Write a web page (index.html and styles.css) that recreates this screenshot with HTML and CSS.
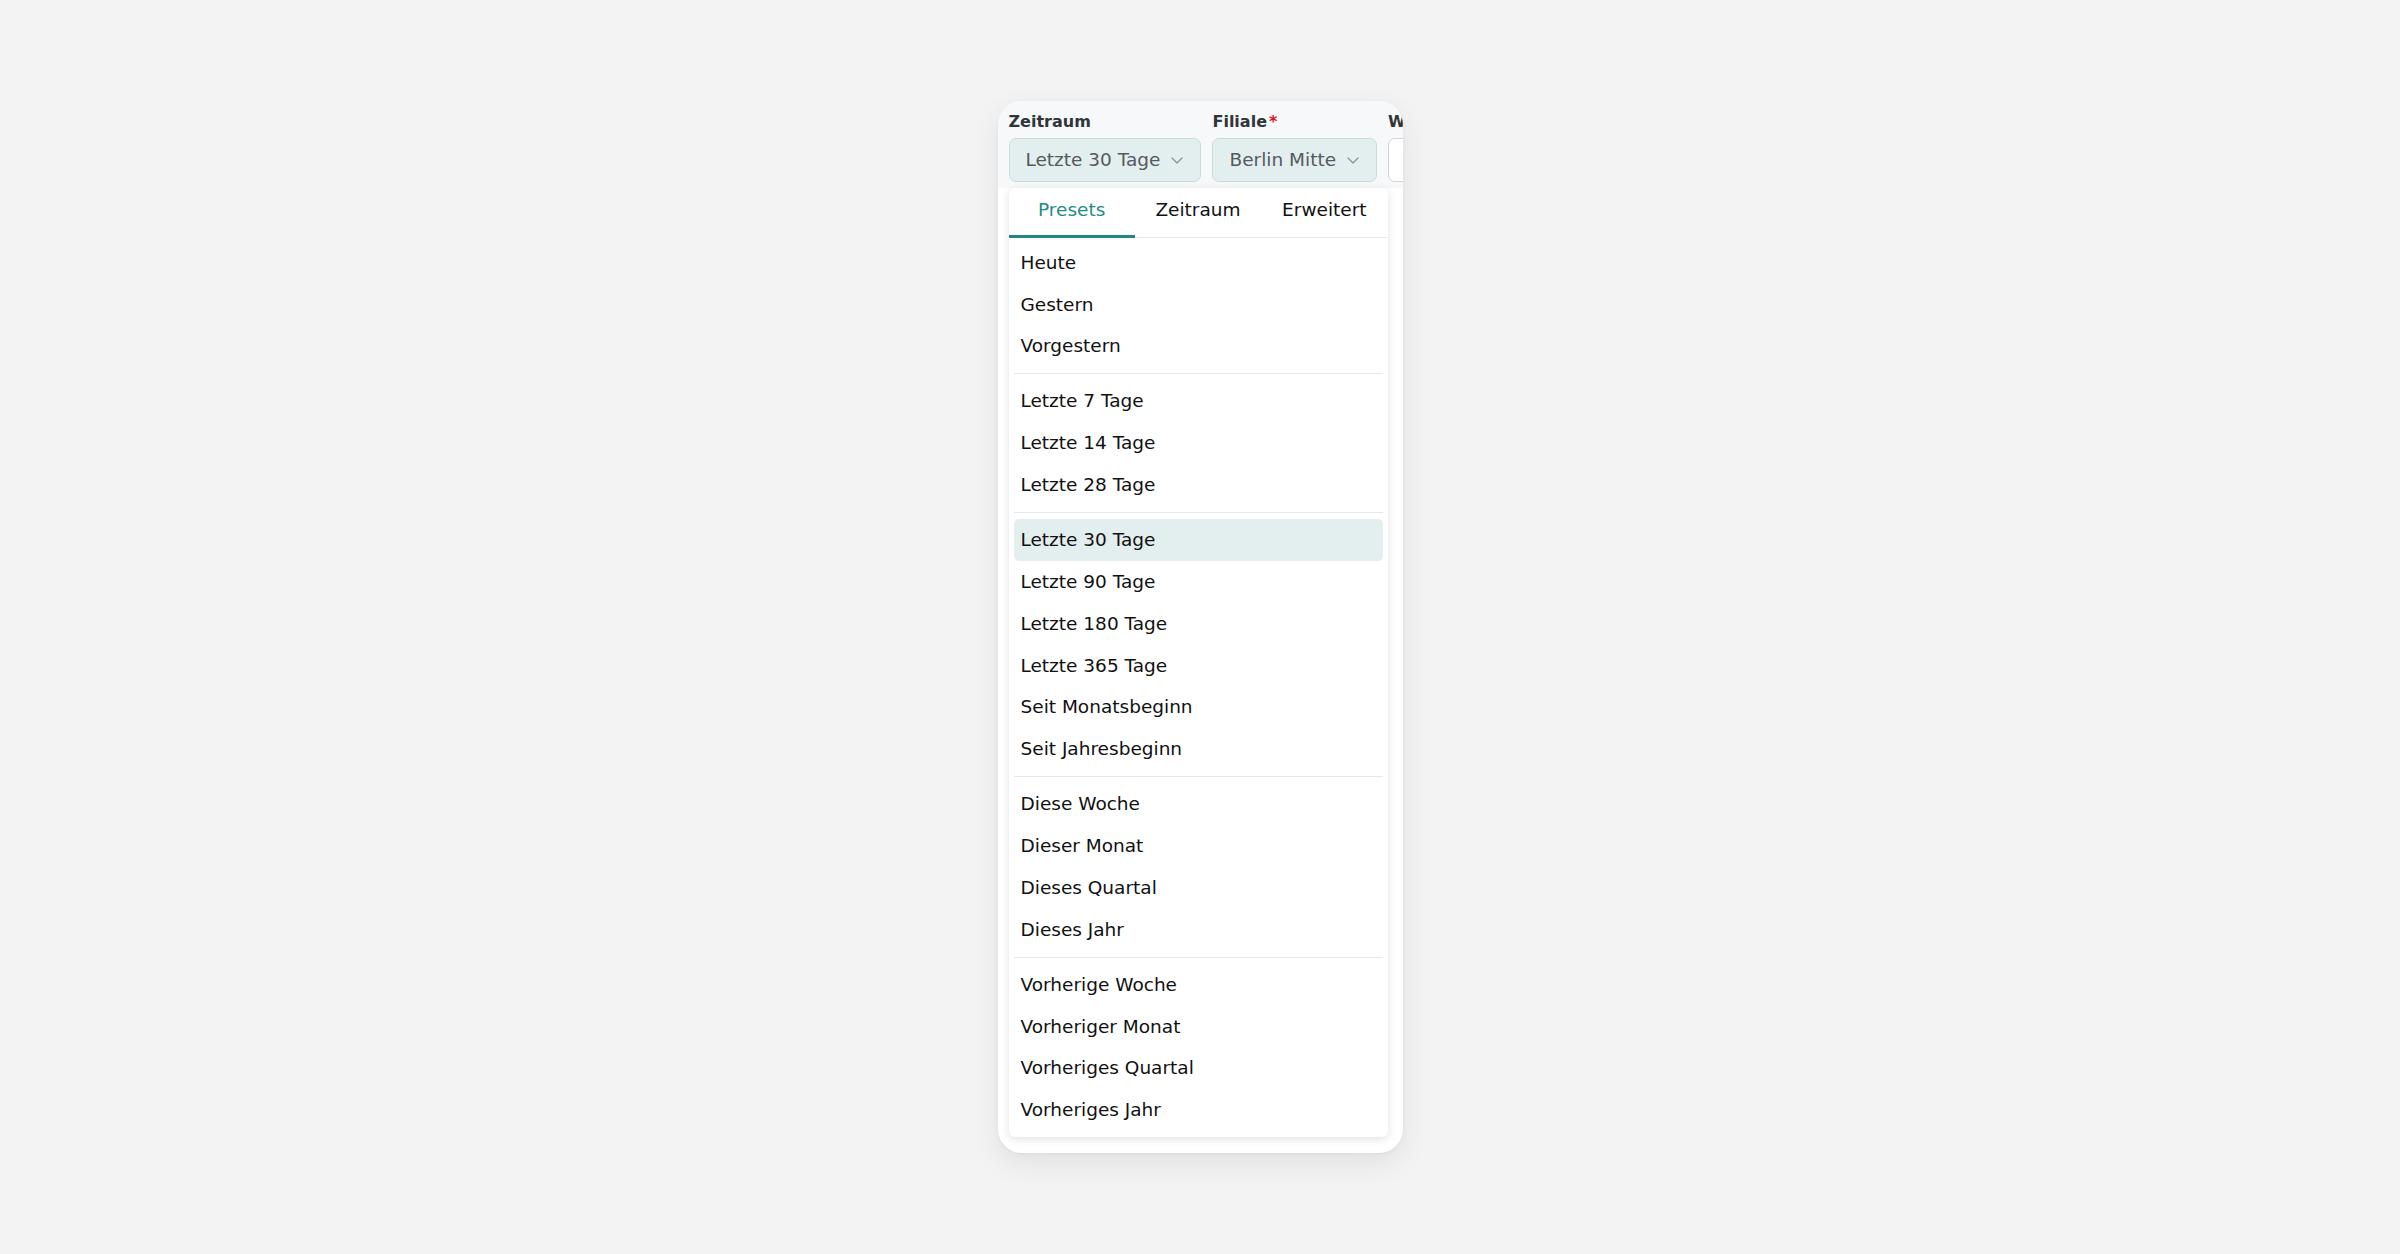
FILE: index.html
```html
<!DOCTYPE html>
<html lang="de">
<head>
<meta charset="utf-8">
<title>Zeitraum Filter</title>
<link rel="stylesheet" href="styles.css">
</head>
<body>
<div class="stage">
  <div class="card">
    <div class="filters">
      <div class="field field-range">
        <div class="label">Zeitraum</div>
        <div class="select">
          <span class="select-text">Letzte 30 Tage</span>
          <svg class="chev" width="12" height="7" viewBox="0 0 12 7"><path d="M1 1 L6 6 L11 1" fill="none" stroke="#8c9292" stroke-width="1.3" stroke-linecap="round" stroke-linejoin="round"/></svg>
        </div>
      </div>
      <div class="field field-branch">
        <div class="label">Filiale<span class="req">*</span></div>
        <div class="select">
          <span class="select-text">Berlin Mitte</span>
          <svg class="chev" width="12" height="7" viewBox="0 0 12 7"><path d="M1 1 L6 6 L11 1" fill="none" stroke="#8c9292" stroke-width="1.3" stroke-linecap="round" stroke-linejoin="round"/></svg>
        </div>
      </div>
      <div class="field field-group">
        <div class="label">Warengruppe</div>
        <div class="select select-plain">
          <span class="select-text">Alle</span>
        </div>
      </div>
    </div>
    <div class="panel">
      <div class="tabs">
        <div class="tab active">Presets</div>
        <div class="tab">Zeitraum</div>
        <div class="tab">Erweitert</div>
      </div>
      <div class="list">
        <div class="item">Heute</div>
        <div class="item">Gestern</div>
        <div class="item">Vorgestern</div>
        <div class="sep"></div>
        <div class="item">Letzte 7 Tage</div>
        <div class="item">Letzte 14 Tage</div>
        <div class="item">Letzte 28 Tage</div>
        <div class="sep"></div>
        <div class="item selected">Letzte 30 Tage</div>
        <div class="item">Letzte 90 Tage</div>
        <div class="item">Letzte 180 Tage</div>
        <div class="item">Letzte 365 Tage</div>
        <div class="item">Seit Monatsbeginn</div>
        <div class="item">Seit Jahresbeginn</div>
        <div class="sep"></div>
        <div class="item">Diese Woche</div>
        <div class="item">Dieser Monat</div>
        <div class="item">Dieses Quartal</div>
        <div class="item">Dieses Jahr</div>
        <div class="sep"></div>
        <div class="item">Vorherige Woche</div>
        <div class="item">Vorheriger Monat</div>
        <div class="item">Vorheriges Quartal</div>
        <div class="item">Vorheriges Jahr</div>
      </div>
    </div>
  </div>
</div>
</body>
</html>
```
FILE: styles.css
```css
* { box-sizing: border-box; }
html, body { margin: 0; padding: 0; }
body {
  background: #f3f3f3;
  font-family: "DejaVu Sans", "Liberation Sans", sans-serif;
  color: #111;
}
.stage {
  min-height: 100vh;
  display: flex;
  align-items: center;
  justify-content: center;
}
.card {
  width: 405px;
  background: #ffffff;
  border-radius: 24px;
  overflow: hidden;
  box-shadow: 0 10px 28px rgba(0, 0, 0, 0.08), 0 1px 4px rgba(0, 0, 0, 0.04);
  padding-bottom: 16px;
}
.filters {
  background: #f6f8f9;
  display: flex;
  gap: 11px;
  padding: 11px 0 6px 11px;
  overflow: hidden;
  white-space: nowrap;
}
.field { flex: none; display: flex; flex-direction: column; gap: 6px; }
.label {
  font-size: 16px;
  line-height: 20px;
  font-weight: bold;
  color: #30353a;
}
.req { color: #e0101a; margin-left: 2px; }
.select {
  height: 44px;
  display: flex;
  align-items: center;
  gap: 11px;
  padding: 0 17px 0 16px;
  border: 1px solid #c8dbda;
  border-radius: 7px;
  background: #e3eeee;
}
.select-text {
  font-size: 18.5px;
  color: #555a5e;
  line-height: 22px;
}
.chev { flex: none; margin-top: 1px; }
.select-plain {
  background: #ffffff;
  border-color: #cfd5d6;
  width: 160px;
  padding-left: 20px;
}
.panel {
  margin-left: 11px;
  width: 379px;
  background: #ffffff;
  border-radius: 6px;
  box-shadow: 0 2px 8px rgba(0, 0, 0, 0.12);
}
.tabs {
  display: grid;
  grid-template-columns: 1fr 1fr 1fr;
  box-shadow: inset 0 -1px 0 #e4e7e8;
}
.tab {
  height: 50px;
  padding-bottom: 3px;
  border-bottom: 3px solid transparent;
  display: flex;
  align-items: center;
  justify-content: center;
  font-size: 18.5px;
  color: #111;
}
.tab.active {
  color: #238c88;
  border-bottom-color: #208784;
}
.list {
  padding: 4px 5px 6px;
}
.item {
  height: 41.88px;
  display: flex;
  align-items: center;
  padding-left: 7px;
  padding-bottom: 1px;
  font-size: 18.5px;
  color: #111;
  border-radius: 5px;
}
.item.selected { background: #e3eeee; }
.sep {
  height: 1px;
  background: #e5e7e8;
  margin: 6px 0;
}
```
